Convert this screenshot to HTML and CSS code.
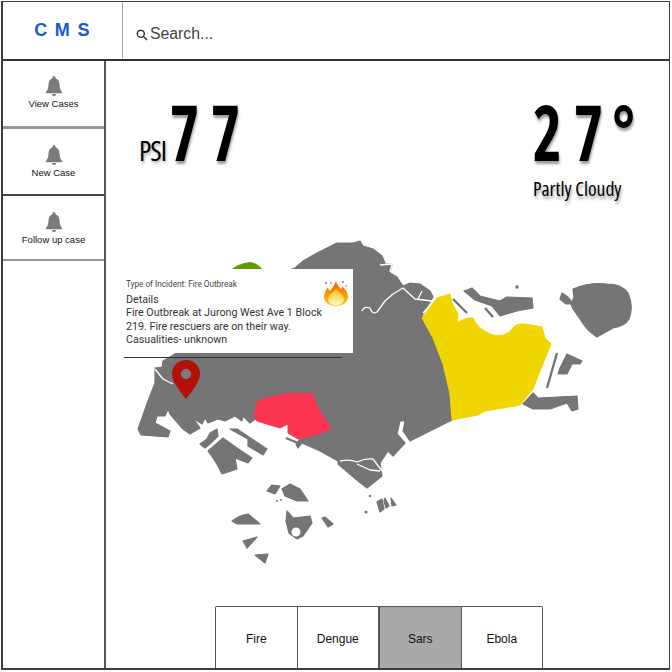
FILE: index.html
```html
<!DOCTYPE html>
<html lang="en">
<head>
<meta charset="utf-8">
<title>CMS</title>
<link rel="stylesheet" href="styles.css">
</head>
<body>
<div class="app">
  <header class="topbar">
    <div class="logo">C M S</div>
    <div class="search">
      <svg class="search-icon" viewBox="0 0 12 12"><circle cx="4.8" cy="4.8" r="3.5"/><path d="M7.4 7.4L11 11"/></svg>
      <span>Search...</span>
    </div>
  </header>
  <div class="body">
    <nav class="sidebar">
      <a class="nav-item nav-first">
        <svg class="bell" viewBox="0 0 18 20"><path d="M9 0a1.6 1.6 0 0 1 1.5 1.6l0 .6C13.400 3 14.300 5.500 14.500 8.500c.2 3.500.8 5.800 2.500 7.500v1.300H1V16c1.700-1.700 2.300-4 2.500-7.500C3.700 5.500 4.600 3 7.500 2.200l0-.6A1.600 1.600 0 0 1 9 0z"/><path d="M6.800 18h4.400a2.200 2 0 0 1-4.400 0z"/></svg>
        <span>View Cases</span>
      </a>
      <a class="nav-item nav-second">
        <svg class="bell" viewBox="0 0 18 20"><path d="M9 0a1.6 1.6 0 0 1 1.5 1.6l0 .6C13.400 3 14.300 5.500 14.500 8.500c.2 3.500.8 5.800 2.500 7.500v1.300H1V16c1.700-1.700 2.300-4 2.500-7.500C3.700 5.500 4.600 3 7.500 2.200l0-.6A1.600 1.600 0 0 1 9 0z"/><path d="M6.800 18h4.400a2.200 2 0 0 1-4.400 0z"/></svg>
        <span>New Case</span>
      </a>
      <a class="nav-item nav-third">
        <svg class="bell" viewBox="0 0 18 20"><path d="M9 0a1.6 1.6 0 0 1 1.5 1.6l0 .6C13.400 3 14.300 5.500 14.500 8.500c.2 3.500.8 5.800 2.500 7.500v1.300H1V16c1.700-1.700 2.300-4 2.500-7.500C3.700 5.500 4.600 3 7.500 2.200l0-.6A1.600 1.600 0 0 1 9 0z"/><path d="M6.800 18h4.400a2.200 2 0 0 1-4.400 0z"/></svg>
        <span>Follow up case</span>
      </a>
    </nav>
    <main class="main">
      <svg class="map" viewBox="106 60 564 609">
        <defs>
          <filter id="soft" x="-5%" y="-5%" width="110%" height="110%"><feGaussianBlur stdDeviation=".55"/></filter>
        </defs>
        <path class="green" d="M230 270Q236 263 250 261Q258 262 262 268L262 285L230 285Z"/>
        <g filter="url(#soft)">
          <g class="land">
            <path d="M138 428L142 417L148 400L155 382L155 367L162 366L163 360L175 353L175 300L240 285L295 267L303 260L317 252L337 242L353 242L360 240L363 245L373 248L382 255L385 262L380 263L392 263L390 272L397 276L403 285L410 282L420 283L430 290L433 296L423 313L422 317L433 337L443 363L450 393L452 419L430 430L410 440L403 430L405 420L400 420L397 433L405 442L393 455L388 450L380 462L382 475L367 487L358 480L338 463L338 460L320 450L302 442L298 447L296 443L300 438L290 420L255 418L250 422L243 415L242 420L235 415L225 420L218 418L208 422L205 417L202 423L193 417L200 427L190 433L183 428L170 413L168 408L165 415L157 415L155 422L170 430L168 436L141 434Z"/>
            <path d="M464 290L472 287L480 295L500 300L507 296L532 297L533 307L517 310L500 315L492 305L475 299Z"/>
            <path d="M573 288Q590 281 607 283Q622 283 628 292Q634 305 629 318Q625 325 613 327L597 336Q587 330 580 318L573 308L571 303L566 303L560 298L562 292L568 296L572 301L574 296Z"/>
            <path d="M560 367L567 353L582 360L580 363L572 363L567 373L558 373Z"/>
            <path d="M533 392L538 397L577 395L578 408L572 410L567 402L550 408L533 408L523 403Z"/>
            <path d="M200 443L207 438L210 432L217 428L218 435L210 443L205 447Z"/>
            <path d="M230 428L237 428L267 448L263 454L248 445L248 438Z"/>
            <path d="M208 450L223 437L237 447L252 457L248 462L235 457L237 468L222 473L218 465L213 457Z"/>
            <path d="M267 490L272 484L280 485L275 493Z"/>
            <path d="M282 488L290 483L300 488L308 500L297 500L285 495Z"/>
            <path d="M232 520Q240 514 248 513L260 523L237 523Z"/>
            <path d="M287 510L293 517L310 515L312 522L303 535L297 538L289 532L286 520Z"/>
            <path d="M322 517L325 516L333 523L328 526Z"/>
            <path d="M243 540L257 536L247 547Z"/>
            <path d="M255 554L268 553L265 562Z"/>
            <path d="M377 501L382 498L384 508L380 511Z"/>
            <path d="M385 497L389 505L386 507L384 500Z"/>
            <path d="M391 497L396 504L392 505Z"/>
          </g>
          <g class="rivers">
            <path d="M362 310Q364 305 370 307Q372 314 377 311L385 300L393 293L403 287L415 298L432 300"/>
            <path d="M422 290L418 298"/>
            <path d="M423 312L432 302"/>
            <path d="M380 264L392 263L390 271"/>
            <path d="M155 368L163 378L173 383"/>
            <path d="M340 460Q350 458 357 461Q365 457 373 458L382 470"/>
            <path d="M357 463L370 469L380 470"/>
          </g>
          <path class="strip" d="M453 298L467 312M485 307L493 316M557 352L547 387M286 437L298 442"/>
          <circle class="dot" cx="517" cy="286" r="1.800"/>
          <circle class="dot" cx="370" cy="495" r="1.200"/>
          <circle class="dot" cx="366" cy="511" r="1.500"/>
          <circle class="dot" cx="277" cy="500" r="1"/>
          <circle class="dot" cx="281" cy="499" r="1"/>
          <circle class="hole" cx="296" cy="531" r="4.500"/>
          <path class="yellow" d="M422 317L437 297L450 293L452 302L458 313L457 322Q466 316 473 317Q477 327 490 333Q504 338 512 328Q516 322 525 323L542 326L545 337L551 343L540 370L533 388L520 404L503 407L485 410L478 414L452 419L450 393L443 363L433 337Z"/>
          <path class="red" d="M254 415L258 400L273 395L292 392L307 393L312 392L318 407L331 427L322 432L298 438L288 432L288 423L280 427L257 420Z"/>
        </g>
        <path class="pin" fill-rule="evenodd" d="M186 359C178 359 172 365 172 373C172 381 180 390 186 398C192 390 200 381 200 373C200 365 194 359 186 359ZM186 368a5 5 0 1 1 0 10a5 5 0 1 1 0-10Z"/>
        <circle class="pin-hole" cx="186" cy="373" r="5"/>
      </svg>
      <section class="stats">
        <div class="psi"><span class="psi-label">PSI</span><span class="big">77</span></div>
        <div class="weather"><div class="big">27<span class="deg">°</span></div><div class="cond">Partly Cloudy</div></div>
      </section>
      <aside class="popup">
        <svg class="flame" viewBox="0 0 24 26">
          <defs><linearGradient id="fl" x1="0" y1="0" x2="0" y2="1"><stop offset="0" stop-color="#f4511e"/><stop offset=".45" stop-color="#fb8c00"/><stop offset="1" stop-color="#ffca28"/></linearGradient><linearGradient id="fi" x1="0" y1="0" x2="0" y2="1"><stop offset="0" stop-color="#ffc107"/><stop offset="1" stop-color="#fff9c4"/></linearGradient></defs>
          <path fill="url(#fl)" d="M12 1C13 5 15 7 17 9C18 8 18 7 18 6C21 9 24 12 24 17C24 22 19 26 12 26C5 26 0 22 0 17C0 13 2 10 4 7C4 9 5 10 6 11C8 8 11 5 12 1Z"/>
          <path fill="url(#fi)" d="M12 8C13 12 20 14 20 19.500C20 23 16 25 12 25C8 25 4 23 4 19.500C4 14 11 12 12 8Z"/>
          <circle fill="#e53935" cx="2" cy="3" r=".9"/><circle fill="#e53935" cx="7" cy="3" r=".8"/><circle fill="#e53935" cx="19" cy="2" r=".9"/><circle fill="#e53935" cx="22" cy="6" r=".8"/>
        </svg>
        <div class="popup-type">Type of Incident: Fire Outbreak</div>
        <div class="popup-body">Details<br>Fire Outbreak at Jurong West Ave 1 Block<br>219. Fire rescuers are on their way.<br>Casualities- unknown</div>
      </aside>
      <hr class="popup-rule">
      <div class="tabs">
        <button class="tab">Fire</button>
        <button class="tab">Dengue</button>
        <button class="tab tab-active">Sars</button>
        <button class="tab">Ebola</button>
      </div>
    </main>
  </div>
</div>
</body>
</html>
```
FILE: styles.css
```css
* { box-sizing: border-box; }
html, body { margin: 0; padding: 0; background: #fff; }
body { width: 672px; height: 672px; overflow: hidden; font-family: "Liberation Sans", Arial, sans-serif; }

.app {
  width: 669px;
  height: 669px;
  margin: 1px 0 0 1px;
  border: solid #3d3d3d;
  border-width: 1px 1px 2px 2px;
  display: flex;
  flex-direction: column;
  position: relative;
}
.topbar {
  height: 59px;
  flex: none;
  display: flex;
  border-bottom: 2px solid #333;
}
.logo {
  width: 120px;
  flex: none;
  padding: 18px 0 0 0;
  text-align: center;
  color: #1558d6;
  font-weight: 700;
  font-size: 18px;
  line-height: 20px;
  letter-spacing: 1.300px;
  border-right: 1px solid #a8a8a8;
  margin-bottom: 1px;
}
.search {
  flex: 1;
  display: flex;
  align-items: center;
  gap: 2px;
  padding: 6px 0 0 13px;
  color: #444;
  font-size: 15.800px;
}
.search-icon { width: 12px; height: 12px; margin-top: 2px; fill: none; stroke: #222; stroke-width: 1.3; }

.body { flex: 1; display: flex; min-height: 0; }
.sidebar {
  width: 103px;
  flex: none;
  border-right: 2px solid #555;
}
.nav-item {
  display: flex;
  flex-direction: column;
  align-items: center;
  color: #111;
  font-size: 9.500px;
  line-height: 11px;
  padding-top: 15px;
}
.nav-item .bell { width: 18px; height: 20px; fill: #7b7b7b; margin-bottom: 2px; }
.nav-first { height: 68px; border-bottom: 3px solid #999; }
.nav-second { height: 67px; border-bottom: 2px solid #444; padding-top: 16px; }
.nav-third { height: 65px; border-bottom: 2px solid #999; padding-top: 16px; }

.main {
  flex: 1;
  position: relative;
  display: flex;
  flex-direction: column;
  min-width: 0;
}
.map { position: absolute; left: 0; top: 0; width: 564px; height: 609px; }
.land path { fill: #757575; stroke: #757575; stroke-width: 1.200; stroke-linejoin: round; }
.dot { fill: #757575; }
.green { fill: #5f9c00; }
.yellow { fill: #f1d500; stroke: #f1d500; stroke-width: 1; stroke-linejoin: round; }
.red { fill: #fb3450; stroke: #fb3450; stroke-width: 1; stroke-linejoin: round; }
.pin { fill: #b40f08; }
.pin-hole { fill: #7a7a7a; }
.rivers { fill: none; stroke: #fff; stroke-width: 1.300; stroke-linejoin: round; }
.strip { fill: none; stroke: #757575; stroke-width: 2.400; }
.hole { fill: #fff; }

.stats {
  position: relative;
  display: flex;
  justify-content: space-between;
  padding: 32px 0 0 33px;
  font-family: "Open Sans", "Liberation Sans", sans-serif;
  font-stretch: 75%;
  color: #000;
}
.psi { display: flex; align-items: baseline; gap: 4px; }
.psi-label { font-size: 28px; line-height: 77px; letter-spacing: -1px; text-shadow: 1px 2px 3px rgba(0,0,0,.35); }
.big {
  display: inline-block;
  font-size: 77px;
  line-height: 77px;
  font-weight: 700;
  letter-spacing: 15px;
  transform: scaleX(.8);
  transform-origin: left center;
  text-shadow: 1px 3px 3px rgba(0,0,0,.4);
}
.weather { width: 136px; }
.weather .big { display: block; white-space: nowrap; }
.deg { margin-left: -3px; }
.cond { font-size: 19.600px; line-height: 24px; margin-top: 7px; font-weight: 400; text-shadow: 1px 3px 3px rgba(0,0,0,.4); }

.popup {
  position: absolute;
  left: 18px;
  top: 208px;
  width: 229px;
  height: 84px;
  padding: 9px 2px;
  background: #fff;
  font-family: Roboto, "Liberation Sans", sans-serif;
  color: #333;
}
.popup-type { font-size: 8.200px; line-height: 12px; color: #444; }
.popup-body { font-size: 10.700px; line-height: 13.400px; margin-top: 3px; }
.flame { position: absolute; right: 5px; top: 11px; width: 24px; height: 26px; }
.popup-rule {
  position: absolute;
  left: 18px;
  top: 296px;
  width: 218px;
  margin: 0;
  border: 0;
  border-top: 1px solid #333;
}

.tabs {
  position: relative;
  margin-top: auto;
  margin-left: 109px;
  width: 328px;
  height: 62px;
  display: flex;
  border: 1px solid #555;
  border-bottom: 0;
  border-radius: 2px 2px 0 0;
}
.tab {
  flex: 1;
  padding: 2px 0 0;
  background: #fff;
  border: 0;
  border-right: 1px solid #555;
  font: 12px "Liberation Sans", Arial, sans-serif;
  color: #111;
}
.tab:last-child { border-right: 0; }
.tab-active { background: #a9a9a9; border-left: 1px solid #555; }
```
